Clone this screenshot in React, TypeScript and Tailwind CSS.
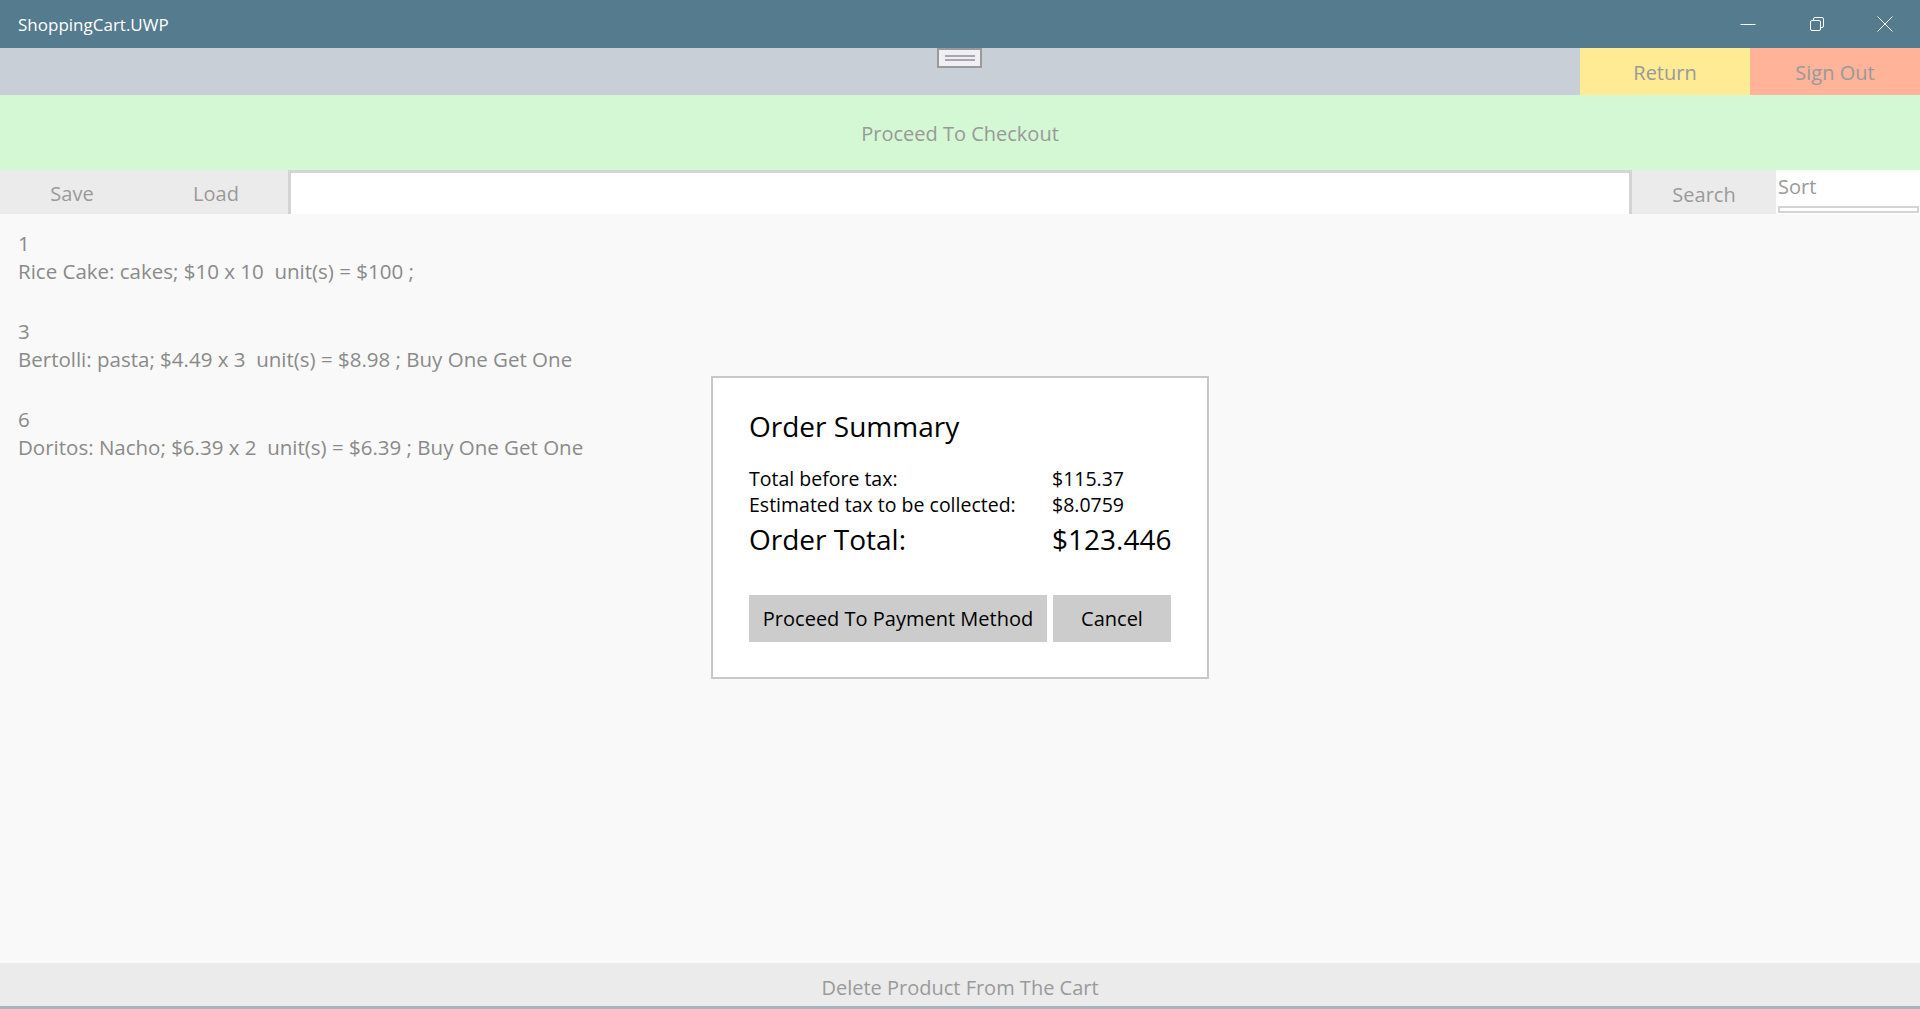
const font = { fontFamily: '"Open Sans", "Noto Sans", Arial, sans-serif' };

const items = [
  { id: "1", text: "Rice Cake: cakes; $10 x 10  unit(s) = $100 ;" },
  { id: "3", text: "Bertolli: pasta; $4.49 x 3  unit(s) = $8.98 ; Buy One Get One" },
  { id: "6", text: "Doritos: Nacho; $6.39 x 2  unit(s) = $6.39 ; Buy One Get One" },
];

function MinimizeIcon() {
  return (
    <svg width="16" height="16" viewBox="0 0 16 16" fill="none" stroke="white" strokeWidth="1">
      <path d="M0.5 8.5h15" />
    </svg>
  );
}

function RestoreIcon() {
  return (
    <svg width="16" height="16" viewBox="0 0 16 16" fill="none" stroke="white" strokeWidth="1">
      <rect x="1.5" y="4.5" width="10" height="10" rx="1.5" />
      <path d="M4.5 4.5V3a1.5 1.5 0 0 1 1.5-1.5h7A1.5 1.5 0 0 1 14.5 3v7a1.5 1.5 0 0 1-1.5 1.5h-1.5" />
    </svg>
  );
}

function CloseIcon() {
  return (
    <svg width="16" height="16" viewBox="0 0 16 16" fill="none" stroke="white" strokeWidth="1">
      <path d="M0.5 0.5l15 15M15.5 0.5l-15 15" />
    </svg>
  );
}

export default function App() {
  return (
    <div className="flex h-[1009px] w-[1920px] flex-col overflow-hidden bg-[#f9f9f9]" style={font}>
      {/* title bar */}
      <div className="flex h-[48px] items-center bg-[#557b8e] text-white">
        <div className="pl-[18px] pt-[1px] text-[17px]">ShoppingCart.UWP</div>
        <div className="ml-auto flex h-full items-center">
          <div className="flex w-[69px] items-center justify-center">
            <MinimizeIcon />
          </div>
          <div className="flex w-[69px] items-center justify-center">
            <RestoreIcon />
          </div>
          <div className="flex w-[69px] items-center justify-center pr-[1px]">
            <CloseIcon />
          </div>
        </div>
      </div>

      {/* command bar */}
      <div className="relative flex h-[47px] bg-[#c9cfd7]">
        <div className="absolute left-[937px] top-0 flex h-[20px] w-[45px] flex-col items-center justify-center gap-[2px] border-2 border-[#9a9a9a] bg-[#f0f0f4]">
          <div className="h-[2px] w-[30px] bg-[#a8a8a8]" />
          <div className="h-[2px] w-[30px] bg-[#a8a8a8]" />
        </div>
        <div className="ml-auto flex">
          <button className="flex w-[170px] items-center justify-center bg-[#ffeb94] pt-[2px] text-[20px] text-[#999999]">
            Return
          </button>
          <button className="flex w-[170px] items-center justify-center bg-[#ffb499] pt-[2px] text-[20px] text-[#999999]">
            Sign Out
          </button>
        </div>
      </div>

      {/* checkout */}
      <button className="flex h-[75px] items-center justify-center bg-[#d4f7d4] pt-[2px] text-[20px] text-[#999999]">
        Proceed To Checkout
      </button>

      {/* toolbar */}
      <div className="flex h-[44px] bg-[#ebebeb]">
        <button className="w-[144px] pt-[4px] text-[20px] text-[#9a9a9a]">Save</button>
        <button className="w-[144px] pt-[4px] text-[20px] text-[#9a9a9a]">Load</button>
        <div className="flex-1 border-l-[3px] border-r-[3px] border-t-[3px] border-[#d4d4d4] bg-white" />
        <button className="w-[144px] pt-[5px] text-[20px] text-[#9a9a9a]">Search</button>
        <div className="flex w-[144px] flex-col bg-white pl-[2px] pr-[1px]">
          <div className="text-[20px] leading-[34px] text-[#9a9a9a]">Sort</div>
          <div className="mt-[2px] h-[7px] border-2 border-[#d4d4d4] bg-white" />
        </div>
      </div>

      {/* cart list */}
      <div className="relative flex-1">
        <div className="flex flex-col gap-[32px] px-[18px] pt-[15px] text-[20.5px] leading-[28px] text-[#8a8a8a]">
          {items.map((it) => (
            <div key={it.id}>
              <div>{it.id}</div>
              <div className="whitespace-pre">{it.text}</div>
            </div>
          ))}
        </div>

        {/* order summary dialog */}
        <div className="absolute left-[711px] top-[162px] flex h-[303px] w-[498px] flex-col border-2 border-[#c8c8c8] bg-white px-[36px] pt-[30px] text-black">
          <div className="text-[28px] leading-[36px]">Order Summary</div>
          <div className="mt-[22px] grid grid-cols-[303px_1fr] text-[19.5px] leading-[26px]">
            <div>Total before tax:</div>
            <div>$115.37</div>
            <div>Estimated tax to be collected:</div>
            <div>$8.0759</div>
            <div className="text-[28px] leading-[42px]">Order Total:</div>
            <div className="text-[28px] leading-[42px]">$123.446</div>
          </div>
          <div className="mt-[35px] flex gap-[6px]">
            <button className="h-[47px] w-[298px] bg-[#cccccc] text-[20px]">Proceed To Payment Method</button>
            <button className="h-[47px] w-[118px] bg-[#cccccc] text-[20px]">Cancel</button>
          </div>
        </div>
      </div>

      {/* delete */}
      <button className="h-[43px] bg-[#ebebeb] pt-[7px] text-[20px] text-[#9a9a9a]">Delete Product From The Cart</button>
      <div className="h-[3px] bg-[#aab4bc]" />
    </div>
  );
}
